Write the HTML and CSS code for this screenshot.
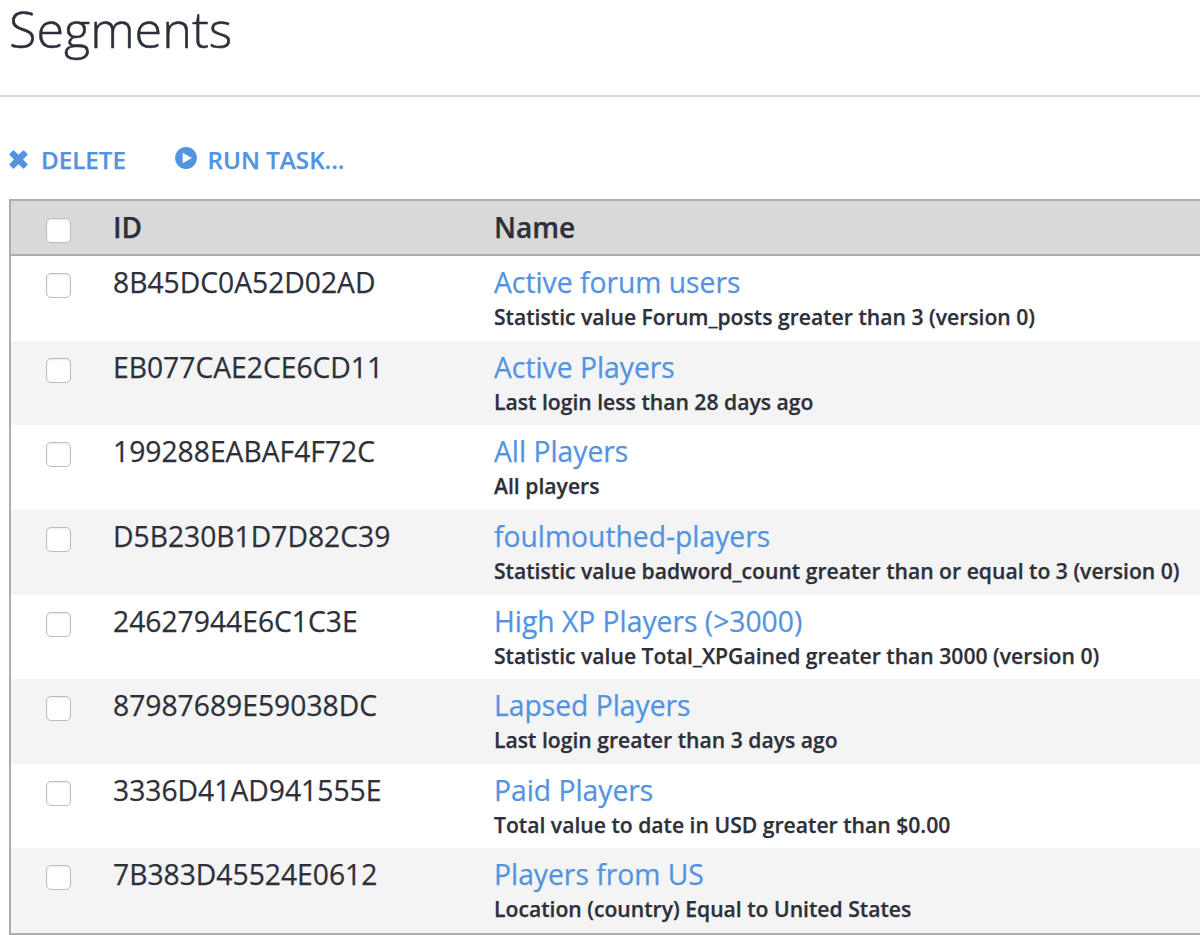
FILE: index.html
```html
<!DOCTYPE html>
<html lang="en">
<head>
<meta charset="utf-8">
<title>Segments</title>
<link rel="stylesheet" href="styles.css">
</head>
<body>
<header class="page-header"><h1>Segments</h1></header>
<nav class="actions">
<a class="action"><svg class="icon-x" viewBox="0 0 18 18"><path d="M4.2 1 9 5.5 13.8 1 17 4.2 12.4 9 17 13.8 13.8 17 9 12.5 4.2 17 1 13.8 5.6 9 1 4.2Z" fill="currentColor" stroke="currentColor" stroke-width="1.3" stroke-linejoin="round"/></svg><span>DELETE</span></a>
<a class="action"><svg class="icon-play" viewBox="0 0 22 22"><circle cx="11" cy="11" r="10.9" fill="currentColor"/><path d="M8 6.2v9.6l8.4-4.8z" fill="#fff" stroke="#fff" stroke-width=".6" stroke-linejoin="round"/></svg><span>RUN TASK...</span></a>
</nav>
<main class="segments">
<div class="row head"><i class="check"></i><span class="id">ID</span><span class="name">Name</span></div>
<div class="row"><i class="check"></i><span class="id">8B45DC0A52D02AD</span><div class="info"><a>Active forum users</a><p>Statistic value Forum_posts greater than 3 (version 0)</p></div></div>
<div class="row"><i class="check"></i><span class="id">EB077CAE2CE6CD11</span><div class="info"><a>Active Players</a><p>Last login less than 28 days ago</p></div></div>
<div class="row"><i class="check"></i><span class="id">199288EABAF4F72C</span><div class="info"><a>All Players</a><p>All players</p></div></div>
<div class="row"><i class="check"></i><span class="id">D5B230B1D7D82C39</span><div class="info"><a>foulmouthed-players</a><p>Statistic value badword_count greater than or equal to 3 (version 0)</p></div></div>
<div class="row"><i class="check"></i><span class="id">24627944E6C1C3E</span><div class="info"><a>High XP Players (&gt;3000)</a><p>Statistic value Total_XPGained greater than 3000 (version 0)</p></div></div>
<div class="row"><i class="check"></i><span class="id">87987689E59038DC</span><div class="info"><a>Lapsed Players</a><p>Last login greater than 3 days ago</p></div></div>
<div class="row"><i class="check"></i><span class="id">3336D41AD941555E</span><div class="info"><a>Paid Players</a><p>Total value to date in USD greater than $0.00</p></div></div>
<div class="row"><i class="check"></i><span class="id">7B383D45524E0612</span><div class="info"><a>Players from US</a><p>Location (country) Equal to United States</p></div></div>
</main>
</body>
</html>
```

FILE: styles.css
```css
* { box-sizing: border-box; }
body { margin: 0; height: 935px; background: #fff; color: #2d303a; font-family: "Open Sans", sans-serif; -webkit-text-stroke: .25px currentColor; }
.page-header { height: 97px; padding-left: 9px; border-bottom: 2px solid #d8d8d8; }
h1 { margin: 0; font-size: 50.3px; line-height: 58px; font-weight: 300; -webkit-text-stroke-width: .5px; }
.actions { display: flex; height: 102px; padding: 22px 0 0 9px; gap: 49px; color: #5294e0; font-size: 24.2px; font-weight: 600; }
.action { display: flex; align-items: center; height: 80px; white-space: nowrap; }
.icon-x { width: 19px; height: 19px; margin-right: 13px; }
.icon-play { width: 22px; height: 22px; margin: 0 10.5px 2px 0; }
.segments { height: 736px; margin-left: 9px; border: 2px solid #adadad; border-right: 0; }
.row { display: grid; grid-template-columns: 102px 381px 1fr; height: 84.65px; white-space: nowrap; }
.row:nth-child(odd) { background: #f4f4f4; }
.row.head { height: 55px; background: #d9d9d9; border-bottom: 2px solid #adadad; font-size: 28.1px; font-weight: 600; line-height: 53px; }
.check { width: 25px; height: 25px; margin: 17px 0 0 35px; border: 1px solid #bcbcbc; border-radius: 5px; background: #fff; box-shadow: inset 0 1px 2px rgba(0,0,0,.08); }
.id { font-size: 28.25px; line-height: 52px; }
.head .id { font-size: 28.1px; line-height: 53px; }
.info a { display: block; height: 46px; color: #5294e0; font-size: 28.25px; line-height: 52px; }
.info p { margin: 0; font-size: 21.15px; font-weight: 600; line-height: 30px; }
```
